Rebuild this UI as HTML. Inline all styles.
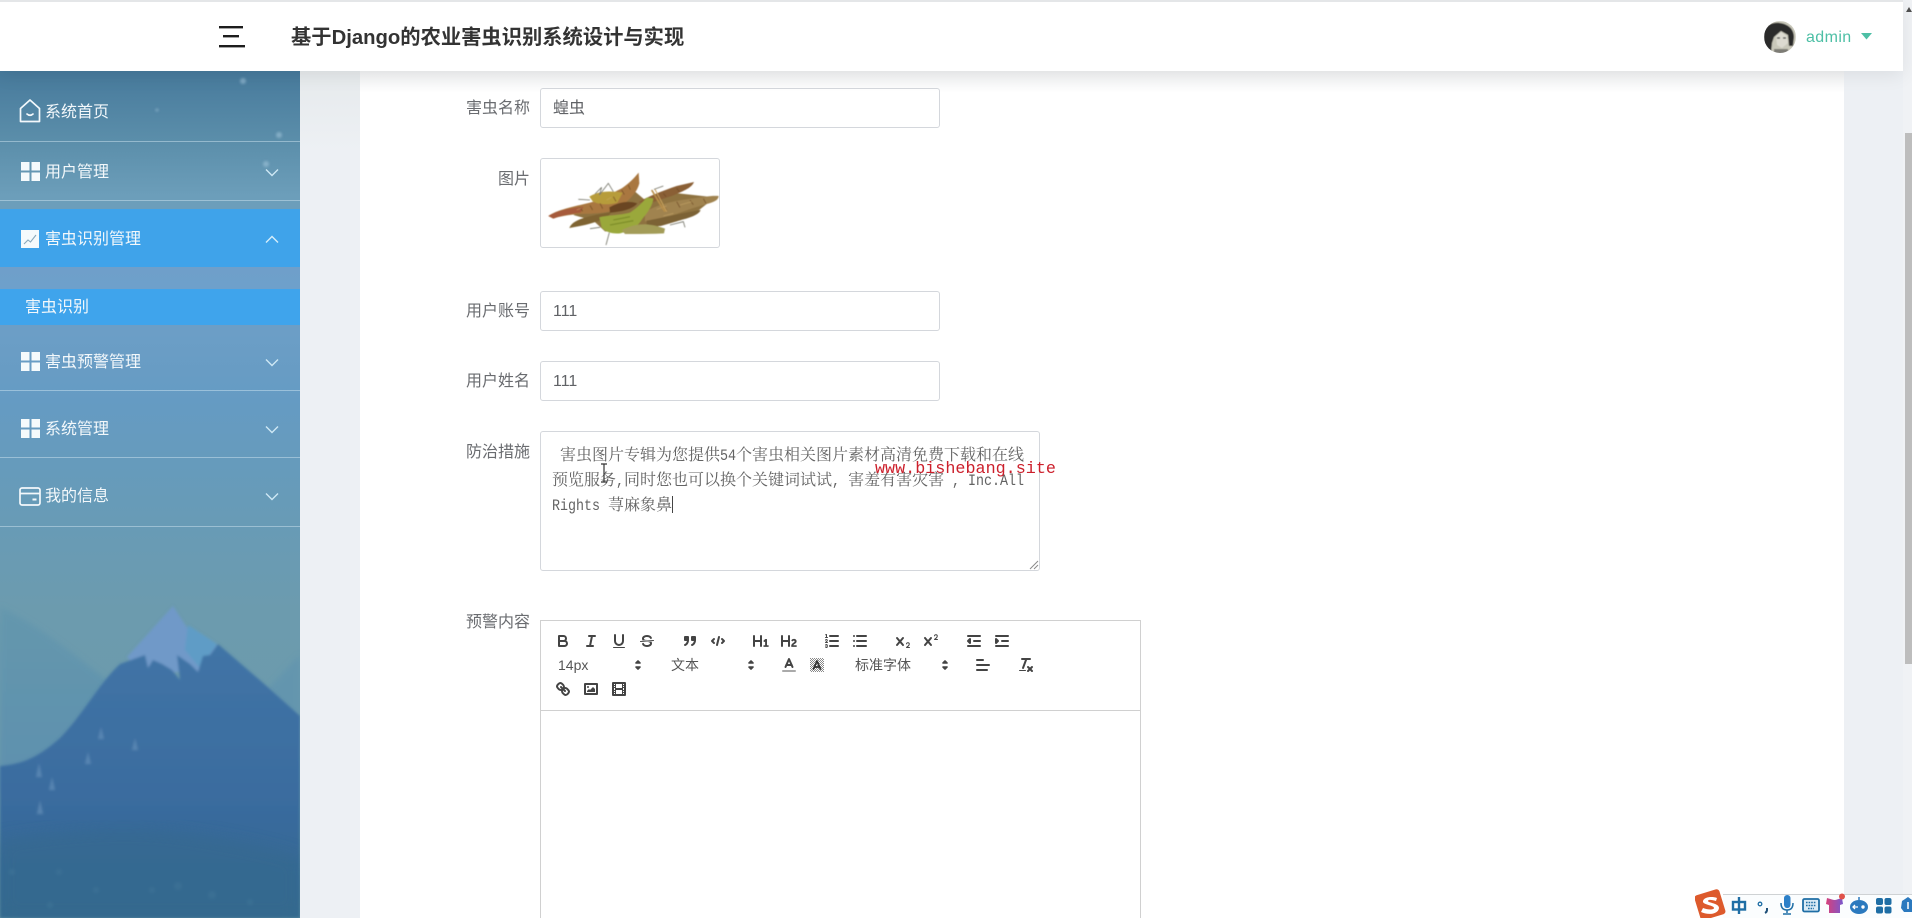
<!DOCTYPE html>
<html lang="zh">
<head>
<meta charset="utf-8">
<title>基于Django的农业害虫识别系统设计与实现</title>
<style>
*{box-sizing:border-box}
html,body{margin:0;padding:0;width:1912px;height:918px;overflow:hidden;background:#edf0f4;font-family:"Liberation Sans","Noto Sans CJK SC",sans-serif}
#wrap{position:absolute;left:0;top:0;width:1912px;height:918px;overflow:hidden}
.abs{position:absolute}
#header{position:absolute;left:0;top:0;width:1903px;height:71px;background:#fff;border-top:2px solid #e4e6e8;box-shadow:0 4px 18px rgba(0,0,0,.08);z-index:5}
#title{position:absolute;left:291px;top:22px;font-size:20.3px;line-height:28px;font-weight:700;color:#333;white-space:nowrap}
#admin{position:absolute;left:1806px;top:24px;font-size:16px;line-height:24px;color:#4dbfa5;letter-spacing:.4px}
#side{position:absolute;left:0;top:71px;width:300px;height:847px;overflow:hidden;background:linear-gradient(180deg,#477a9c 0,#5b8eaa 70px,#6c9eba 125px,#6c9ec6 260px,#659bc3 330px,#679bb8 430px,#6c9bae 540px,#6a99a8 847px)}
.mi{position:absolute;left:45px;font-size:16px;line-height:24px;color:#f3f8fb;white-space:nowrap}
.ln{position:absolute;left:0;width:300px;height:1px;background:rgba(205,228,240,.5)}
#card{position:absolute;left:360px;top:0;width:1484px;height:918px;background:#fff}
#cardtop{position:absolute;left:360px;top:71px;width:1484px;height:22px;background:linear-gradient(180deg,#f1f2f3,#fff)}
#gutter{position:absolute;left:300px;top:71px;width:60px;height:847px;background:linear-gradient(180deg,#e6eaec,#edf0f4 80px)}
.lab{position:absolute;width:130px;left:400px;text-align:right;font-size:16px;line-height:24px;color:#6a6c70;white-space:nowrap}
.inp{position:absolute;left:540px;width:400px;height:40px;border:1px solid #d4d7dc;border-radius:3px;padding-left:12px;font-size:16px;line-height:40px;color:#606266;background:#fff}
#imgbox{position:absolute;left:540px;top:158px;width:180px;height:90px;border:1px solid #d4d7dc;border-radius:3px;background:#fff}
#ta{position:absolute;left:540px;top:431px;width:500px;height:140px;border:1px solid #d4d7dc;border-radius:3px;background:#fff}
#ta div{position:absolute;left:11px;height:25px;font-family:"Liberation Mono","Noto Serif CJK SC",monospace;font-size:16px;line-height:25px;color:#636363;white-space:pre}
#ta span.l{display:inline-block;transform:scaleX(.8333);transform-origin:0 50%;white-space:pre}
#wm{position:absolute;left:875px;top:460px;font-family:"Liberation Mono",monospace;font-size:16.75px;line-height:20px;color:#cc1f2b;white-space:nowrap;z-index:3}
#ed{position:absolute;left:540px;top:620px;width:601px;height:298px;border:1px solid #d0d0d0;border-bottom:0}
#tb{position:absolute;left:0;top:0;width:599px;height:90px;border-bottom:1px solid #d0d0d0;padding:8px}
#tb .g{float:left;margin-right:15px}
#tb .b{float:left;width:28px;height:24px;padding:3px 5px}
#tb .p{float:left;position:relative;height:24px;font-size:14px;line-height:24px;color:#555;padding-left:9px}
#tb .p svg{position:absolute;right:0;top:3px}
#tb svg{display:block;width:18px;height:18px;fill:none;stroke:#444;stroke-width:2;stroke-linecap:round;stroke-linejoin:round}
#tb .f{fill:#444;stroke:none}
#tb .t{stroke-width:1}
#sb{position:absolute;left:1903px;top:0;width:9px;height:918px;background:#f0f2f5}
#thumb{position:absolute;left:2px;top:133px;width:7px;height:531px;background:#bdbdbd}
#ime{position:absolute;left:1723px;top:894px;width:189px;height:24px;background:#fbfdfe;border-top:1px solid #cfd2d4;z-index:6}
</style>
</head>
<body>
<div id="wrap">
<div id="card"></div>
<div id="gutter"></div>
<div id="cardtop"></div>

<!-- sidebar -->
<div id="side">
<svg class="abs" style="left:0;top:0" width="300" height="847" viewBox="0 71 300 847">
<defs><filter id="bl"><feGaussianBlur stdDeviation="1.200"/></filter><filter id="bl3"><feGaussianBlur stdDeviation="3"/></filter><filter id="bl8"><feGaussianBlur stdDeviation="8"/></filter>
<linearGradient id="mt" x1="0" y1="0" x2="0" y2="1"><stop offset="0" stop-color="#4174a6"/><stop offset=".55" stop-color="#3a6c9f"/><stop offset=".75" stop-color="#376a98"/><stop offset="1" stop-color="#346a90"/></linearGradient>
<linearGradient id="hill" x1="0" y1="0" x2="0" y2="1"><stop offset="0" stop-color="#6597ad"/><stop offset="1" stop-color="#5d90ae"/></linearGradient></defs>
<g filter="url(#bl3)"><path d="M0 607C40 625 80 660 120 690L130 790H0Z" fill="url(#hill)"/>
<path d="M262 695L300 655V730H280Z" fill="#6395ae"/></g>
<g filter="url(#bl)">
<path d="M127 657L173 606L195 640L217 646L205 672H140Z" fill="#6f99c8"/>
<path d="M188 625L217 644L200 668L185 650Z" fill="#5f9cc6"/>
<path d="M0 766C28 764 44 752 60 738C82 716 100 682 120 664L145 655L148 668L153 660L162 664L172 670L180 680L177 655L190 664L198 672L203 656L210 655L218 644L262 682L300 716V918H0Z" fill="url(#mt)"/>
<g fill="#6e98c0" opacity=".55"><path d="M101 727l3 12h-6z"/><path d="M135 738l3 12h-6z"/><path d="M88 752l3 12h-6z"/><path d="M39 763l3 14h-6z"/><path d="M52 777l3 13h-6z"/><path d="M40 800l3 14h-6z"/></g>
<g fill="#4f8aa8" opacity=".4"><circle cx="12" cy="872" r="3"/><circle cx="59" cy="872" r="3"/><circle cx="96" cy="890" r="3"/><circle cx="152" cy="890" r="3"/><circle cx="178" cy="886" r="4"/><circle cx="212" cy="895" r="4"/><circle cx="250" cy="902" r="3"/><circle cx="50" cy="905" r="3"/></g>
<g fill="#a7c8dc" opacity=".55"><circle cx="243" cy="81" r="3"/><circle cx="157" cy="110" r="1.500"/><circle cx="279" cy="135" r="3"/><circle cx="266" cy="164" r="3"/></g>
</g>
<path d="M0 840C70 830 130 824 190 834C230 840 270 848 300 858V918H0Z" fill="#35698c" opacity=".5" filter="url(#bl8)"/>
</svg>
<div class="abs" style="left:0;top:138px;width:300px;height:58px;background:#3fa3ea"></div>
<div class="abs" style="left:0;top:196px;width:300px;height:22px;background:linear-gradient(180deg,#6f9fca,#6ea0cb)"></div>
<div class="abs" style="left:0;top:218px;width:300px;height:36px;background:#3fa4ec"></div>
<div class="ln" style="top:70px"></div>
<div class="ln" style="top:129px"></div>
<div class="ln" style="top:319px"></div>
<div class="ln" style="top:386px"></div>
<div class="ln" style="top:455px"></div>
<div class="mi" style="top:30px">系统首页</div>
<div class="mi" style="top:90px">用户管理</div>
<div class="mi" style="top:157px">害虫识别管理</div>
<div class="mi" style="left:25px;top:225px">害虫识别</div>
<div class="mi" style="top:280px">害虫预警管理</div>
<div class="mi" style="top:347px">系统管理</div>
<div class="mi" style="top:414px">我的信息</div>
<!-- icons -->
<svg class="abs" style="left:19px;top:28px" width="22" height="24" viewBox="0 0 22 24" fill="none" stroke="#f3f8fb" stroke-width="1.700" stroke-linejoin="round" stroke-linecap="round"><path d="M1.500 9.500L11 1l9.500 8.500v13h-19z"/><path d="M8 15q3 2.600 6 0"/></svg>
<svg class="abs" style="left:21px;top:91px" width="19" height="19" fill="#f5fafc"><rect width="8.500" height="8.500"/><rect x="10.500" width="8.500" height="8.500"/><rect y="10.500" width="8.500" height="8.500"/><rect x="10.500" y="10.500" width="8.500" height="8.500"/></svg>
<svg class="abs" style="left:21px;top:159px" width="18" height="18"><rect width="18" height="18" fill="#f5fafc"/><path d="M3 14l4-4 2.500 2L15 5" fill="none" stroke="#8aa9bb" stroke-width="1.100"/></svg>
<svg class="abs" style="left:21px;top:281px" width="19" height="19" fill="#f5fafc"><rect width="8.500" height="8.500"/><rect x="10.500" width="8.500" height="8.500"/><rect y="10.500" width="8.500" height="8.500"/><rect x="10.500" y="10.500" width="8.500" height="8.500"/></svg>
<svg class="abs" style="left:21px;top:348px" width="19" height="19" fill="#f5fafc"><rect width="8.500" height="8.500"/><rect x="10.500" width="8.500" height="8.500"/><rect y="10.500" width="8.500" height="8.500"/><rect x="10.500" y="10.500" width="8.500" height="8.500"/></svg>
<svg class="abs" style="left:19px;top:416px" width="22" height="19" fill="none" stroke="#f3f8fb" stroke-width="1.700"><rect x="1" y="1" width="20" height="17" rx="2"/><path d="M1 6.500h20"/><path d="M13.500 12.500h4" stroke-width="2"/></svg>
<!-- chevrons -->
<svg class="abs" style="left:265px;top:97px" width="14" height="9" fill="none" stroke="#cfe8f5" stroke-width="1.400"><path d="M1 1.500l6 6 6-6"/></svg>
<svg class="abs" style="left:265px;top:164px" width="14" height="9" fill="none" stroke="#d7eefa" stroke-width="1.400"><path d="M1 7.500l6-6 6 6"/></svg>
<svg class="abs" style="left:265px;top:287px" width="14" height="9" fill="none" stroke="#cfe8f5" stroke-width="1.400"><path d="M1 1.500l6 6 6-6"/></svg>
<svg class="abs" style="left:265px;top:354px" width="14" height="9" fill="none" stroke="#cfe8f5" stroke-width="1.400"><path d="M1 1.500l6 6 6-6"/></svg>
<svg class="abs" style="left:265px;top:421px" width="14" height="9" fill="none" stroke="#cfe8f5" stroke-width="1.400"><path d="M1 1.500l6 6 6-6"/></svg>
</div>

<!-- header -->
<div id="header">
<svg class="abs" style="left:219px;top:23px" width="27" height="24" fill="#1d1d1d"><rect x="0" y="1" width="24" height="2.400"/><rect x="4" y="10" width="16" height="2.400"/><rect x="0" y="20" width="26" height="2.400"/></svg>
<div id="title">基于Django的农业害虫识别系统设计与实现</div>
<svg class="abs" style="left:1764px;top:19px" width="32" height="32" viewBox="0 0 32 32"><defs><clipPath id="av"><circle cx="16" cy="16" r="16"/></clipPath><filter id="avb"><feGaussianBlur stdDeviation=".5"/></filter></defs><g clip-path="url(#av)"><g filter="url(#avb)"><rect width="32" height="32" fill="#c9c8ba"/><path d="M0 32V10C3 3 10 1 16 2c8 1 14 6 14 14l-1 9-4 0-1-11-7-4-7 6-2 6-1 10z" fill="#2c2c29"/><path d="M12 15l5-4 6 4 1 7-6 5-5-3z" fill="#dcdad0"/><path d="M10 28h14v6H10z" fill="#7d7c74"/><path d="M13 17l3 0M19 17l3 0" stroke="#333" stroke-width="1.300"/></g></g></svg>
<div id="admin">admin</div>
<svg class="abs" style="left:1861px;top:31px" width="11" height="7"><path d="M0 0h11L5.500 6.500z" fill="#4dbfa5"/></svg>
</div>

<!-- form -->
<div class="lab" style="top:97px">害虫名称</div>
<div class="inp" style="top:88px">蝗虫</div>
<div class="lab" style="top:168px">图片</div>
<div id="imgbox"></div>
<svg class="abs" style="left:530px;top:150px" width="200" height="110" viewBox="0 0 600 330">
<defs><filter id="gb"><feGaussianBlur stdDeviation="1.800"/></filter></defs>
<g filter="url(#gb)">
<!-- base mass -->
<path d="M130 195L250 140 300 112 345 150 425 128 555 142 505 182 400 224 320 250 225 244 190 212Z" fill="#8e7240"/>
<!-- left locust wing -->
<path d="M55 198C80 180 130 170 180 158C215 148 245 130 275 115C295 102 312 85 326 68L328 100C322 125 300 150 268 172C240 190 200 190 150 192C115 194 85 200 70 206Z" fill="#a9773f"/>
<path d="M55 198C80 182 115 176 160 170L152 188C115 192 85 200 70 206Z" fill="#a65a3a"/>
<path d="M118 234C125 215 150 204 210 192L245 186C232 205 200 218 150 228Z" fill="#7f6430"/>
<!-- right locust wing -->
<path d="M325 158C350 140 400 122 440 108L492 96C485 115 455 125 425 138L370 156Z" fill="#8a5f36"/>
<path d="M345 186C380 165 430 152 490 145C520 141 545 136 566 138C565 150 555 156 520 165C480 176 440 192 385 210L345 214Z" fill="#a08350"/>
<path d="M350 212C390 205 450 190 512 180C505 198 470 205 440 214L392 228 350 226Z" fill="#7b6234"/>
<!-- green locust -->
<path d="M208 202C230 196 270 196 300 188C320 175 335 160 350 143L370 145C368 165 355 185 338 205C325 225 315 238 270 250C245 252 225 245 215 232Z" fill="#9aa83a"/>
<path d="M275 240C310 222 350 215 405 236L402 250C360 252 320 252 285 252Z" fill="#a39c58"/>
<path d="M178 140C200 126 230 120 278 128L262 158C240 165 210 165 188 154Z" fill="#b79c3b"/>
<path d="M238 172C262 158 295 150 322 160C310 175 285 184 240 188Z" fill="#6a4522"/>
<!-- mottling -->
<g stroke="#6f4a24" stroke-width="3" opacity=".7"><path d="M150 172l8 12M180 166l8 14M210 160l8 16M250 140l8 14M275 120l8 14M295 105l6 14M400 165l10 16M440 155l10 18M480 150l10 14M520 146l8 14M400 130l8 10M440 115l8 10"/></g>
<g stroke="#c9a868" stroke-width="2.500" opacity=".6"><path d="M140 180l14-6M230 150l14-8M380 178l30-10M450 165l35-10M400 198l30-8"/></g>
<path d="M365 120L395 170 405 185" stroke="#b88f48" stroke-width="5" fill="none"/>
<path d="M375 118L410 185" stroke="#c9a25c" stroke-width="3" fill="none"/>
<path d="M250 210L300 200M240 225L310 212" stroke="#7f8f2a" stroke-width="4" fill="none"/>
<g stroke="#76766a" stroke-width="2.500" fill="none"><path d="M195 132L215 112 208 135 235 100 250 125"/><path d="M238 248L228 285"/><path d="M180 236L210 232"/><path d="M420 225L460 215 465 232"/><path d="M145 148L180 150"/><path d="M372 118L400 108"/></g>
</g></svg>
<div class="lab" style="top:300px">用户账号</div>
<div class="inp" style="top:291px">111</div>
<div class="lab" style="top:370px">用户姓名</div>
<div class="inp" style="top:361px">111</div>
<div class="lab" style="top:441px">防治措施</div>
<div id="ta">
<div style="top:12px"><span class="l" style="margin-right:-1.600px"> </span>害虫图片专辑为您提供<span class="l" style="margin-right:-3.200px">54</span>个害虫相关图片素材高清免费下载和在线</div>
<div style="top:37px">预览服务<span class="l" style="margin-right:-1.600px">,</span>同时您也可以换个关键词试试<span class="l" style="margin-right:-3.200px">, </span>害羞有害灾害<span class="l" style="margin-right:-14.400px"> , Inc.All</span></div>
<div style="top:62px"><span class="l" style="margin-right:-11.200px">Rights </span>荨麻象鼻<span style="display:inline-block;width:1px;height:17px;background:#444;vertical-align:-3px"></span></div>
</div>
<svg class="abs" style="left:1029px;top:560px" width="10" height="10" stroke="#8a8a8a" stroke-width="1"><path d="M1 9L9 1M5 9L9 5"/></svg>
<div id="wm">www.bishebang.site</div>
<svg class="abs" style="left:599px;top:463px;z-index:4" width="10" height="20" fill="none" stroke="#333" stroke-width="1.200"><path d="M2 1h6M5 1v18M2 19h6"/></svg>
<div class="lab" style="top:611px">预警内容</div>

<div id="ed"><div id="tb">
<span class="g">
<span class="b"><svg viewBox="0 0 18 18"><path d="M5,4H9.5A2.5,2.5,0,0,1,12,6.5v0A2.5,2.5,0,0,1,9.500,9H5A0,0,0,0,1,5,9V4A0,0,0,0,1,5,4Z"/><path d="M5,9h5.500A2.500,2.500,0,0,1,13,11.500v0A2.500,2.500,0,0,1,10.500,14H5a0,0,0,0,1,0,0V9A0,0,0,0,1,5,9Z"/></svg></span>
<span class="b"><svg viewBox="0 0 18 18"><line x1="7" x2="13" y1="4" y2="4"/><line x1="5" x2="11" y1="14" y2="14"/><line x1="8" x2="10" y1="14" y2="4"/></svg></span>
<span class="b"><svg viewBox="0 0 18 18"><path d="M5,3V9a4.012,4.012,0,0,0,4,4H9a4.012,4.012,0,0,0,4-4V3"/><rect class="f" height="1" rx=".5" ry=".5" width="12" x="3" y="15"/></svg></span>
<span class="b"><svg viewBox="0 0 18 18"><line class="t" x1="15.500" x2="2.500" y1="8.500" y2="9.500"/><path class="f" d="M9.007,8C6.542,7.791,6,7.519,6,6.500,6,5.792,7.283,5,9,5c1.571,0,2.765.679,2.969,1.309a1,1,0,0,0,1.900-.617C13.356,4.106,11.354,3,9,3,6.200,3,4,4.538,4,6.500a3.200,3.200,0,0,0,.5,1.843Z"/><path class="f" d="M8.984,10C11.457,10.208,12,10.479,12,11.500c0,.708-1.283,1.500-3,1.500-1.571,0-2.765-.679-2.969-1.309a1,1,0,1,0-1.900.617C4.644,13.894,6.646,15,9,15c2.800,0,5-1.538,5-3.500a3.200,3.200,0,0,0-.5-1.843Z"/></svg></span>
</span>
<span class="g">
<span class="b"><svg viewBox="0 0 18 18"><rect fill="#444" height="3" width="3" x="4" y="5"/><rect fill="#444" height="3" width="3" x="11" y="5"/><path fill="#444" d="M7,8c0,4.031-3,5-3,5"/><path fill="#444" d="M14,8c0,4.031-3,5-3,5"/></svg></span>
<span class="b"><svg viewBox="0 0 18 18"><polyline points="5 7 3 9 5 11"/><polyline points="13 7 15 9 13 11"/><line x1="10" x2="8" y1="5" y2="13"/></svg></span>
</span>
<span class="g">
<span class="b"><svg viewBox="0 0 18 18"><path class="f" d="M10,4V14a1,1,0,0,1-2,0V10H3v4a1,1,0,0,1-2,0V4A1,1,0,0,1,3,4V8H8V4a1,1,0,0,1,2,0Zm6.068,9.209H14.990V7.599a.541.541,0,0,0-.605-.605h-.627a1.011,1.011,0,0,0-.748.297L11.645,8.566a.544.544,0,0,0-.022.858l.286.308a.539.539,0,0,0,.847.033l.099-.088a1.214,1.214,0,0,0,.242-.353h.022s-.011.309-.011.605V13.209H12.041a.541.541,0,0,0-.605.605v.439a.541.541,0,0,0,.605.605h4.027a.541.541,0,0,0,.605-.605v-.439A.541.541,0,0,0,16.068,13.209Z"/></svg></span>
<span class="b"><svg viewBox="0 0 18 18"><path class="f" d="M16.740,13.814v.439a.541.541,0,0,1-.605.605H11.855a.584.584,0,0,1-.649-.605V14.013c0-2.905,3.399-3.422,3.399-4.555a.777.777,0,0,0-.847-.781,1.177,1.177,0,0,0-.836.385c-.275.264-.561.374-.858.132l-.429-.341c-.308-.242-.385-.518-.154-.814a2.972,2.972,0,0,1,2.454-1.177,2.454,2.454,0,0,1,2.684,2.409c0,2.453-3.179,2.927-3.278,3.938h2.794A.541.541,0,0,1,16.740,13.814ZM9,3A1,1,0,0,0,8,4V8H3V4A1,1,0,0,0,1,4V14a1,1,0,0,0,2,0V10H8v4a1,1,0,0,0,2,0V4A1,1,0,0,0,9,3Z"/></svg></span>
</span>
<span class="g">
<span class="b"><svg viewBox="0 0 18 18"><line x1="7" x2="15" y1="4" y2="4"/><line x1="7" x2="15" y1="9" y2="9"/><line x1="7" x2="15" y1="14" y2="14"/><line class="t" x1="2.500" x2="4.500" y1="5.500" y2="5.500"/><path class="f" d="M3.500,6A.5,.5,0,0,1,3,5.500V3.085l-.276.138A.5,.5,0,0,1,2.053,3c-.124-.247-.023-.324.224-.447l1-.5A.5,.5,0,0,1,4,2.500v3A.5,.5,0,0,1,3.500,6Z"/><path class="t" d="M4.500,10.500h-2c0-.234,1.850-1.076,1.850-2.234A.959,.959,0,0,0,2.500,8.156"/><path class="t" d="M2.500,14.846a.959,.959,0,0,0,1.850-.109A.7,.7,0,0,0,3.750,14a.688,.688,0,0,0,.6-.736,.959,.959,0,0,0-1.850-.109"/></svg></span>
<span class="b"><svg viewBox="0 0 18 18"><line x1="6" x2="15" y1="4" y2="4"/><line x1="6" x2="15" y1="9" y2="9"/><line x1="6" x2="15" y1="14" y2="14"/><line x1="3" x2="3" y1="4" y2="4"/><line x1="3" x2="3" y1="9" y2="9"/><line x1="3" x2="3" y1="14" y2="14"/></svg></span>
</span>
<span class="g">
<span class="b"><svg viewBox="0 0 18 18"><path class="f" d="M15.500,15H13.861a3.858,3.858,0,0,0,1.914-2.975,1.800,1.800,0,0,0-1.600-1.751A1.921,1.921,0,0,0,12.021,11.700a.5,.5,0,1,0,.957.291,.914,.914,0,0,1,1.053-.725,.81,.81,0,0,1,.744.762c0,1.076-1.170,1.870-1.940,2.431A1.456,1.456,0,0,0,12,15.500a.5,.5,0,0,0,.5.5h3A.5,.5,0,0,0,15.500,15Z"/><path class="f" d="M9.650,5.241a1,1,0,0,0-1.409.108L6,7.964,3.759,5.349A1,1,0,0,0,2.241,6.649L4.684,9.500,2.241,12.350A1,1,0,0,0,3.759,13.650L6,11.036,8.241,13.650a1,1,0,1,0,1.518-1.300L7.316,9.500,9.759,6.651A1,1,0,0,0,9.650,5.241Z"/></svg></span>
<span class="b"><svg viewBox="0 0 18 18"><path class="f" d="M15.500,7H13.861a4.015,4.015,0,0,0,1.914-2.975,1.800,1.800,0,0,0-1.600-1.751A1.922,1.922,0,0,0,12.021,3.700a.5,.5,0,1,0,.957.291,.917,.917,0,0,1,1.053-.725,.81,.81,0,0,1,.744.762c0,1.077-1.164,1.925-1.934,2.486A1.423,1.423,0,0,0,12,7.500a.5,.5,0,0,0,.5.5h3A.5,.5,0,0,0,15.500,7Z"/><path class="f" d="M9.651,5.241a1,1,0,0,0-1.410.108L6,7.964,3.759,5.349a1,1,0,1,0-1.519,1.300L4.683,9.500,2.241,12.350a1,1,0,1,0,1.519,1.300L6,11.036,8.241,13.650a1,1,0,0,0,1.519-1.300L7.317,9.500,9.759,6.651A1,1,0,0,0,9.651,5.241Z"/></svg></span>
</span>
<span class="g">
<span class="b"><svg viewBox="0 0 18 18"><line x1="3" x2="15" y1="14" y2="14"/><line x1="3" x2="15" y1="4" y2="4"/><line x1="9" x2="15" y1="9" y2="9"/><polyline points="5 7 5 11 3 9 5 7" fill="#444"/></svg></span>
<span class="b"><svg viewBox="0 0 18 18"><line x1="3" x2="15" y1="14" y2="14"/><line x1="3" x2="15" y1="4" y2="4"/><line x1="9" x2="15" y1="9" y2="9"/><polyline points="3 7 3 11 5 9 3 7" fill="#444"/></svg></span>
</span>
<span style="display:block;clear:both"></span>
<span class="g"><span class="p" style="width:98px">14px<svg viewBox="0 0 18 18"><polygon fill="#444" stroke-width="1.600" points="7 11 9 13 11 11 7 11"/><polygon fill="#444" stroke-width="1.600" points="7 7 9 5 11 7 7 7"/></svg></span></span>
<span class="g"><span class="p" style="width:98px">文本<svg viewBox="0 0 18 18"><polygon fill="#444" stroke-width="1.600" points="7 11 9 13 11 11 7 11"/><polygon fill="#444" stroke-width="1.600" points="7 7 9 5 11 7 7 7"/></svg></span></span>
<span class="g">
<span class="b"><svg viewBox="0 0 18 18"><line x1="3" x2="15" y1="15" y2="15" stroke="#aaa"/><polyline points="5.500 11 9 3 12.500 11"/><line x1="11.630" x2="6.380" y1="9" y2="9"/></svg></span>
<span class="b"><svg viewBox="0 0 18 18"><defs><pattern id="hp" width="2" height="2" patternUnits="userSpaceOnUse" stroke="none"><rect width="1" height="1" fill="#8a8a8a" stroke="none"/><rect x="1" y="1" width="1" height="1" fill="#8a8a8a" stroke="none"/></pattern></defs><rect x="2" y="2" width="14" height="14" fill="url(#hp)" stroke="none"/><polyline points="5.500 13 9 5 12.500 13" stroke="#333" stroke-width="1.700"/><line x1="11.630" x2="6.380" y1="11" y2="11" stroke="#333" stroke-width="1.700"/></svg></span>
</span>
<span class="g"><span class="p" style="width:108px">标准字体<svg viewBox="0 0 18 18"><polygon fill="#444" stroke-width="1.600" points="7 11 9 13 11 11 7 11"/><polygon fill="#444" stroke-width="1.600" points="7 7 9 5 11 7 7 7"/></svg></span></span>
<span class="g"><span class="b"><svg viewBox="0 0 18 18"><line x1="3" x2="15" y1="9" y2="9"/><line x1="3" x2="13" y1="14" y2="14"/><line x1="3" x2="9" y1="4" y2="4"/></svg></span></span>
<span class="g"><span class="b"><svg viewBox="0 0 18 18"><line x1="5" x2="13" y1="3" y2="3"/><line x1="6" x2="9.350" y1="12" y2="3"/><line x1="11" x2="15" y1="11" y2="15"/><line x1="15" x2="11" y1="11" y2="15"/><rect class="f" height="1" rx=".5" ry=".5" width="7" x="2" y="14"/></svg></span></span>
<span style="display:block;clear:both"></span>
<span class="g">
<span class="b"><svg viewBox="0 0 18 18"><line x1="7" x2="11" y1="7" y2="11"/><path d="M8.900,4.577a3.476,3.476,0,0,1,.36,4.679A3.476,3.476,0,0,1,4.577,8.900C3.185,7.500,2.035,6.400,4.217,4.217S7.500,3.185,8.900,4.577Z"/><path d="M13.423,9.100a3.476,3.476,0,0,0-4.679-.36,3.476,3.476,0,0,0,.36,4.679c1.392,1.392,2.500,2.542,4.679.36S14.815,10.500,13.423,9.100Z"/></svg></span>
<span class="b"><svg viewBox="0 0 18 18"><rect height="10" width="12" x="3" y="4"/><circle class="f" cx="6" cy="7" r="1"/><polyline class="f" points="5 12 5 11 7 9 8 10 11 7 13 9 13 12 5 12"/></svg></span>
<span class="b"><svg viewBox="0 0 18 18"><rect height="12" width="12" x="3" y="3"/><rect class="f" height="12" width="1" x="5" y="3"/><rect class="f" height="12" width="1" x="12" y="3"/><rect class="f" height="2" width="8" x="5" y="8"/><rect class="f" height="1" width="3" x="3" y="5"/><rect class="f" height="1" width="3" x="3" y="7"/><rect class="f" height="1" width="3" x="3" y="10"/><rect class="f" height="1" width="3" x="3" y="12"/><rect class="f" height="1" width="3" x="12" y="5"/><rect class="f" height="1" width="3" x="12" y="7"/><rect class="f" height="1" width="3" x="12" y="10"/><rect class="f" height="1" width="3" x="12" y="12"/></svg></span>
</span>
</div></div>

<!-- page scrollbar -->
<div id="sb"><div id="thumb"></div>
<svg class="abs" style="left:3px;top:7px" width="6" height="5"><path d="M3 0L6 5H0z" fill="#505050"/></svg></div>

<!-- IME toolbar -->
<div id="ime"></div>
<svg class="abs" style="left:1695px;top:888px;z-index:7" width="217" height="30" viewBox="1695 888 217 30">
<defs><linearGradient id="sh" x1="0" y1="0" x2="1" y2="0"><stop offset="0" stop-color="#d8407a"/><stop offset="1" stop-color="#7a58cc"/></linearGradient></defs>
<g transform="rotate(-17 1709 905)"><rect x="1697" y="892" width="26" height="26" rx="3" fill="#dd5a2c"/></g>
<path d="M1717 898c-5-2-13-1-14 3-1 4 11 4 11 7 0 2-6 2-11 0l-2 4c6 3 17 3 18-4 0-5-11-5-11-7 0-2 5-1 8 0z" fill="#fff"/>
<g fill="none" stroke="#1f6ea5" stroke-width="2.400"><rect x="1733" y="902" width="12" height="7.500"/><path d="M1739 897v17"/></g>
<circle cx="1760" cy="904" r="1.800" fill="none" stroke="#1f6ea5" stroke-width="1.300"/><path d="M1767 908v2q0 2-2 3" fill="none" stroke="#1f4f78" stroke-width="2"/>
<rect x="1784" y="895" width="6.500" height="13" rx="3.200" fill="#2c80c8"/><path d="M1781 903q0 7 6 7t6-7M1787 910v3M1783 914h8" fill="none" stroke="#1f6ea5" stroke-width="1.500"/>
<rect x="1803" y="899" width="16" height="12.500" rx="1.500" fill="#d9eaf5" stroke="#1f6ea5" stroke-width="1.800"/><path d="M1806 902.500h10M1806 905.500h10M1808 908.500h6" stroke="#1f6ea5" stroke-width="1.500" stroke-dasharray="1.600 1"/>
<path d="M1827 898l5 1.500q3 1 5 0l5-1.500 1 6-3 1v8h-11v-8l-3-1z" fill="url(#sh)"/><circle cx="1842" cy="896.500" r="3" fill="#e0524a"/>
<ellipse cx="1859" cy="907" rx="9" ry="7" fill="#2b79be"/><path d="M1859 900v-3" stroke="#2b79be" stroke-width="1.500"/><circle cx="1863" cy="907" r="1.700" fill="#fff"/><path d="M1853 907h5M1855 905l-2 2 2 2" stroke="#fff" stroke-width="1.300" fill="none"/>
<g fill="#1f6ea5"><rect x="1876" y="898" width="7" height="7" rx="2"/><rect x="1884.500" y="898" width="7" height="7" rx="2"/><rect x="1876" y="906.500" width="7" height="7" rx="2"/><rect x="1884.500" y="906.500" width="7" height="7" rx="2"/></g>
<path d="M1908 897l4 3v12h-8l-3-4 1-7z" fill="#2b79be"/><path d="M1908 902v7" stroke="#fff" stroke-width="1.500"/>
</svg>
</div>
</body>
</html>
